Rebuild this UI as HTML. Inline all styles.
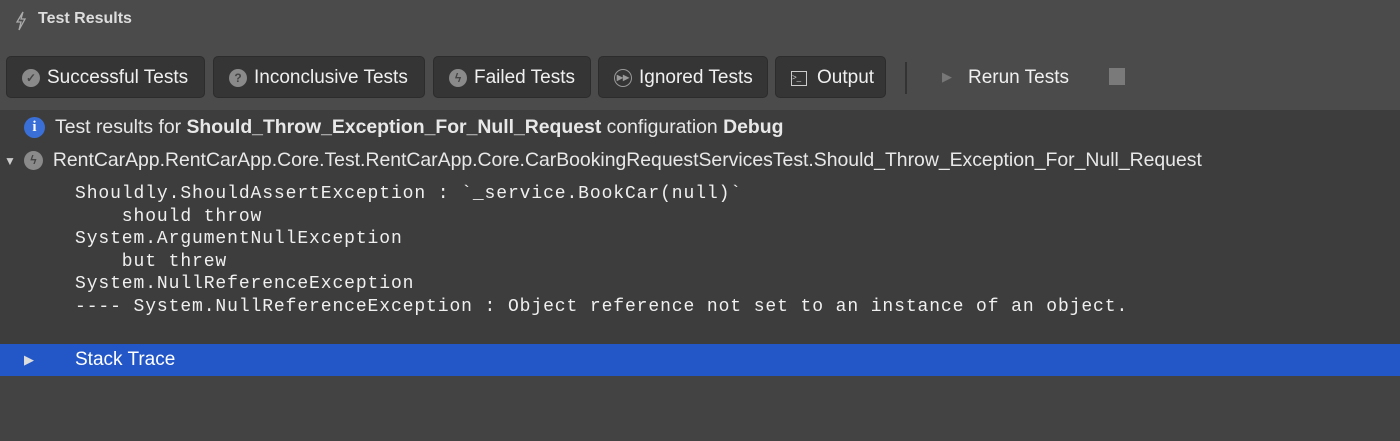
<!DOCTYPE html>
<html><head><style>
body{margin:0;width:1400px;height:441px;background:#3d3d3d;font-family:"Liberation Sans",sans-serif;color:#e8e8e8;overflow:hidden;position:relative}
.top{position:absolute;left:0;top:0;width:1400px;height:110px;background:#4b4b4b}
.title{position:absolute;left:38px;top:10px;font-size:16px;font-weight:bold;color:#ddd}
.btn{position:absolute;top:56px;height:42px;background:#353535;border:1px solid #2c2c2c;border-radius:5px;box-sizing:border-box;font-size:19px;color:#f0f0f0;padding-left:15px;padding-top:2px;display:flex;align-items:center;white-space:nowrap}
.ic{display:inline-block;flex:none;width:18px;height:18px;border-radius:50%;background:#8a8a8a;margin-right:7px;color:#444;font-size:12px;line-height:18px;text-align:center;font-weight:bold}
.row{position:absolute;font-size:19.4px;white-space:nowrap;display:flex;align-items:center}
pre{position:absolute;left:75px;top:183px;margin:0;font-family:"Liberation Mono",monospace;font-size:18px;letter-spacing:0.9px;line-height:22.5px;color:#f0f0f0}
.st{position:absolute;left:0;top:344px;width:1400px;height:32px;background:#2357c8}
.bottom{position:absolute;left:0;top:376px;width:1400px;height:65px;background:#434343}
</style></head><body>
<div class="top"></div>
<svg style="position:absolute;left:15px;top:11px" width="12" height="20" viewBox="0 0 12 20"><path d="M8 1 L2 11 L6 11 L4 19 L10 8 L6 8 Z" fill="none" stroke="#aaa" stroke-width="1.3"/></svg>
<div class="title">Test Results</div>
<div class="btn" style="left:6px;width:199px"><span class="ic">✓</span>Successful Tests</div>
<div class="btn" style="left:213px;width:212px"><span class="ic">?</span>Inconclusive Tests</div>
<div class="btn" style="left:433px;width:158px"><span class="ic">ϟ</span>Failed Tests</div>
<div class="btn" style="left:598px;width:170px"><span class="ic" style="background:none;border:1.5px solid #999;width:16px;height:16px;color:#999;font-size:8px;line-height:16px">▶▶</span>Ignored Tests</div>
<div class="btn" style="left:775px;width:111px"><span style="display:inline-block;width:14px;height:13px;border:1.5px solid #ccc;margin-right:10px;font-size:8px;line-height:11px;color:#ccc">&gt;_</span>Output</div>
<div style="position:absolute;left:905px;top:62px;width:2px;height:32px;background:#333"></div>
<div style="position:absolute;left:942px;top:69px;width:16px;height:18px;color:#777;font-size:13px">▶</div>
<div style="position:absolute;left:968px;top:67px;font-size:19px;color:#f0f0f0">Rerun Tests</div>
<div style="position:absolute;left:1109px;top:68px;width:16px;height:17px;background:#7a7a7a"></div>
<div class="row" style="top:116px;left:24px"><span class="ic" style="background:#3a6fd8;color:#fff;width:21px;height:21px;line-height:21px;font-size:15px;margin-right:10px;font-family:'Liberation Serif',serif">i</span>Test results for&nbsp;<b>Should_Throw_Exception_For_Null_Request</b>&nbsp;configuration&nbsp;<b>Debug</b></div>
<div class="row" style="top:149px;left:4px"><span style="font-size:12px;color:#ccc;margin-right:8px">▼</span><span class="ic" style="width:19px;height:19px;line-height:19px;margin-right:10px">ϟ</span>RentCarApp.RentCarApp.Core.Test.RentCarApp.Core.CarBookingRequestServicesTest.Should_Throw_Exception_For_Null_Request</div>
<pre>Shouldly.ShouldAssertException : `_service.BookCar(null)`
    should throw
System.ArgumentNullException
    but threw
System.NullReferenceException
---- System.NullReferenceException : Object reference not set to an instance of an object.</pre>
<div class="st"></div>
<div style="position:absolute;left:24px;top:352px;font-size:13px;color:#ddd">▶</div>
<div style="position:absolute;left:75px;top:349px;font-size:19px;color:#fff">Stack Trace</div>
<div class="bottom"></div>
</body></html>
